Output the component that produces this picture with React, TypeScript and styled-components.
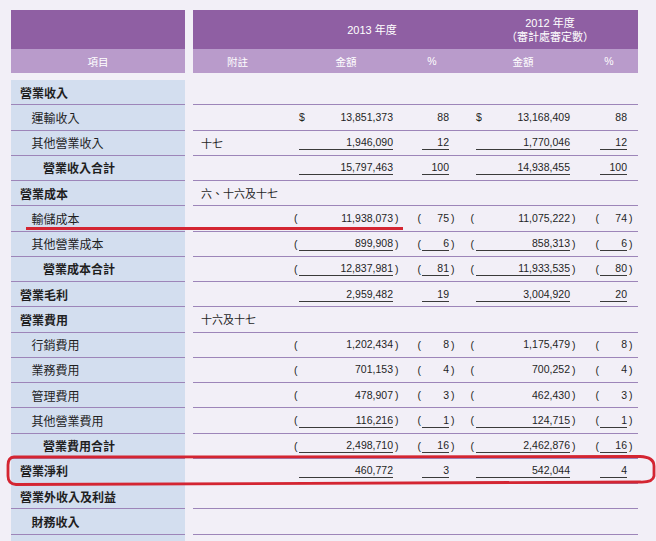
import { createGlobalStyle, styled } from "styled-components";

const GlobalStyle = createGlobalStyle`
    body {
        margin: 0;
        background: #f2eff7;
        font-family: "Liberation Sans", "Noto Sans CJK TC", sans-serif;
        color: #1f1f1f;
    }
`;

const LINE = "#9d85b9";
const DARK = "#8f5fa3";
const SOFT = "#b99bcb";
const BLUE = "#d3deef";

const Page = styled.div`
    position: relative;
    width: 656px;
    height: 541px;
    overflow: hidden;
    box-sizing: border-box;
    padding: 10px 0 0 11px;
`;

const Sheet = styled.div`
    display: grid;
    grid-template-columns: 174px 445px;
    column-gap: 8px;
    align-content: start;
`;

const HeadBlock = styled.div`
    display: flex;
    flex-direction: column;
    margin-bottom: 7px;
`;

const HeadTop = styled.div<{ $cols: string }>`
    height: 39px;
    background: ${DARK};
    color: #fff;
    display: grid;
    grid-template-columns: ${(p) => p.$cols};
    align-items: center;
    text-align: center;
    font-size: 11px;
    line-height: 14px;
`;

const HeadSub = styled.div<{ $cols: string }>`
    height: 24px;
    background: ${SOFT};
    color: #fff;
    display: grid;
    grid-template-columns: ${(p) => p.$cols};
    align-items: center;
    text-align: center;
    font-size: 10.5px;
`;

const LabelCell = styled.div<{ $level: number; $bold?: boolean }>`
    height: 25.25px;
    box-sizing: border-box;
    background: ${BLUE};
    border-bottom: 1px solid ${LINE};
    display: flex;
    align-items: center;
    padding-left: ${(p) => 9 + p.$level * 11.5}px;
    font-size: 12px;
    font-weight: ${(p) => (p.$bold ? 700 : 400)};
    white-space: nowrap;
`;

const DataCell = styled.div`
    height: 25.25px;
    box-sizing: border-box;
    border-bottom: 1px solid ${LINE};
    display: grid;
    grid-template-columns: 101px 110px 52px 124px 54px;
    align-items: center;
`;

const Note = styled.span`
    padding-left: 8px;
    font-size: 11px;
    white-space: nowrap;
`;

const Figure = styled.div<{ $open: number; $value: number; $close: number }>`
    display: grid;
    grid-template-columns: ${(p) => `${p.$open}px ${p.$value}px ${p.$close}px`};
    align-items: center;
    font-size: 10.5px;
    line-height: 14px;
`;

const Open = styled.span<{ $pad: number }>`
    text-align: ${(p) => (p.$pad ? "right" : "left")};
    padding-right: ${(p) => p.$pad}px;
`;

const Value = styled.span<{ $under?: boolean }>`
    display: flex;
    justify-content: space-between;
    border-bottom: 1px solid ${(p) => (p.$under ? "#3a3a3a" : "transparent")};
`;

const Close = styled.span`
    padding-left: 2px;
`;

type Cols = [string, string, string, string];

interface Line {
    label: string;
    level: number;
    bold?: boolean;
    note?: string;
    cols?: Cols;
    neg?: boolean;
    under?: boolean;
    dollar?: boolean;
}

const rows: Line[] = [
    { label: "營業收入", level: 0, bold: true },
    { label: "運輸收入", level: 1, cols: ["13,851,373", "88", "13,168,409", "88"], dollar: true },
    { label: "其他營業收入", level: 1, note: "十七", cols: ["1,946,090", "12", "1,770,046", "12"], under: true },
    { label: "營業收入合計", level: 2, bold: true, cols: ["15,797,463", "100", "14,938,455", "100"], under: true },
    { label: "營業成本", level: 0, bold: true, note: "六、十六及十七" },
    { label: "輸儲成本", level: 1, cols: ["11,938,073", "75", "11,075,222", "74"], neg: true },
    { label: "其他營業成本", level: 1, cols: ["899,908", "6", "858,313", "6"], neg: true, under: true },
    { label: "營業成本合計", level: 2, bold: true, cols: ["12,837,981", "81", "11,933,535", "80"], neg: true, under: true },
    { label: "營業毛利", level: 0, bold: true, cols: ["2,959,482", "19", "3,004,920", "20"], under: true },
    { label: "營業費用", level: 0, bold: true, note: "十六及十七" },
    { label: "行銷費用", level: 1, cols: ["1,202,434", "8", "1,175,479", "8"], neg: true },
    { label: "業務費用", level: 1, cols: ["701,153", "4", "700,252", "4"], neg: true },
    { label: "管理費用", level: 1, cols: ["478,907", "3", "462,430", "3"], neg: true },
    { label: "其他營業費用", level: 1, cols: ["116,216", "1", "124,715", "1"], neg: true, under: true },
    { label: "營業費用合計", level: 2, bold: true, cols: ["2,498,710", "16", "2,462,876", "16"], neg: true, under: true },
    { label: "營業淨利", level: 0, bold: true, cols: ["460,772", "3", "542,044", "4"], under: true },
    { label: "營業外收入及利益", level: 0, bold: true },
    { label: "財務收入", level: 1, bold: true },
    { label: "", level: 0 },
];

// open width, padding before value, value width, close width
const figureSlots = [
    { open: 5, pad: 0, value: 94, close: 11, money: true },
    { open: 18, pad: 1, value: 27, close: 7, money: false },
    { open: 20, pad: 2, value: 94, close: 10, money: true },
    { open: 20, pad: 1, value: 27, close: 7, money: false },
];

function Row({ line }: { line: Line }) {
    return (
        <>
            <LabelCell $level={line.level} $bold={line.bold}>
                {line.label}
            </LabelCell>
            <DataCell>
                <Note>{line.note ?? ""}</Note>
                {line.cols
                    ? line.cols.map((v, i) => {
                          const s = figureSlots[i];
                          return (
                              <Figure key={i} $open={s.open} $value={s.value} $close={s.close}>
                                  <Open $pad={s.pad}>{line.neg ? "(" : ""}</Open>
                                  <Value $under={line.under}>
                                      <span>{line.dollar && s.money ? "$" : ""}</span>
                                      <span>{v}</span>
                                  </Value>
                                  <Close>{line.neg ? ")" : ""}</Close>
                              </Figure>
                          );
                      })
                    : null}
            </DataCell>
        </>
    );
}

const Marks = styled.svg`
    position: absolute;
    left: 0;
    top: 0;
    pointer-events: none;
`;

export default function App() {
    return (
        <Page>
            <GlobalStyle />
            <Sheet>
                <HeadBlock>
                    <HeadTop $cols="1fr" />
                    <HeadSub $cols="1fr">
                        <span>項目</span>
                    </HeadSub>
                </HeadBlock>
                <HeadBlock>
                    <HeadTop $cols="98px 162px 9px 176px">
                        <span />
                        <span>2013 年度</span>
                        <span />
                        <span>
                            2012 年度
                            <br />
                            （審計處審定數）
                        </span>
                    </HeadTop>
                    <HeadSub $cols="89px 128px 44px 138px 34px 1fr">
                        <span>附註</span>
                        <span>金額</span>
                        <span>%</span>
                        <span>金額</span>
                        <span>%</span>
                        <span />
                    </HeadSub>
                </HeadBlock>
                {rows.map((line, i) => (
                    <Row key={i} line={line} />
                ))}
            </Sheet>
            <Marks width="656" height="541" viewBox="0 0 656 541">
                <line x1="26" y1="228.5" x2="403" y2="228.5" stroke="#d42532" strokeWidth="3" />
                <path
                    d="M14 457 L640 456.5 Q654 457 654 466 L654 476 Q653 482.5 640 482 L16 484.5 Q8 484 8 476 L8 465 Q8 457.5 14 457 Z"
                    fill="none"
                    stroke="#d42532"
                    strokeWidth="2.8"
                />
            </Marks>
        </Page>
    );
}
